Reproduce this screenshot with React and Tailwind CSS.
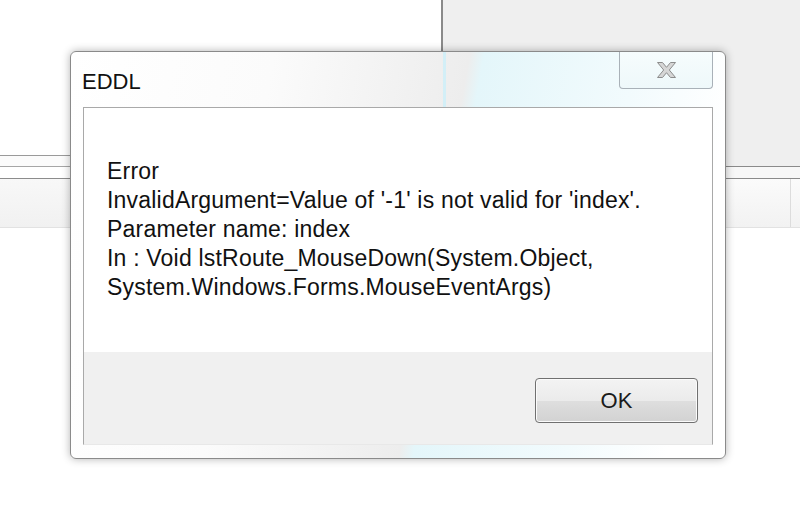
import React from 'react';

const CloseGlyph = () => (
  <svg width="19" height="16" viewBox="0 0 19 16">
    <path
      d="M0.5 0.5 H5.5 L9.5 5.3 L13.5 0.5 H18.5 L12.3 8 L18.5 15.5 H13.5 L9.5 10.7 L5.5 15.5 H0.5 L6.7 8 Z"
      fill="#d6d6d6"
      stroke="#8c8c8c"
      strokeWidth="1"
      strokeLinejoin="round"
    />
  </svg>
);

const App = () => {
  return (
    <div className="relative w-[800px] h-[528px] bg-white overflow-hidden font-['Liberation_Sans',Arial,sans-serif]">
      {/* Background windows */}
      <div className="flex h-[228px]">
        <div className="w-[441px] flex flex-col">
          <div className="h-[155px] bg-white" />
          <div className="h-px bg-[#9a9a9a]" />
          <div className="h-[10px] bg-[#fbfbfb]" />
          <div className="h-px bg-[#a6a6a6]" />
          <div className="h-[11px] bg-white" />
          <div className="h-px bg-[#8c8c8c]" />
          <div className="flex-1 bg-gradient-to-b from-[#f8f8f8] to-[#f1f1f1] border-b border-[#e2e2e2]" />
        </div>
        <div className="flex-1 flex flex-col">
          <div className="h-[166px] bg-[#efefef] border-l-2 border-[#8a8a8a]" />
          <div className="h-px bg-[#8a8a8a]" />
          <div className="h-[11px] bg-[#f7f7f7]" />
          <div className="h-px bg-[#8a8a8a]" />
          <div className="flex-1 flex bg-gradient-to-b from-[#fbfbfb] to-[#f2f2f2] border-b border-[#e2e2e2]">
            <div className="w-[349px]" />
            <div className="w-px bg-[#dcdcdc]" />
          </div>
        </div>
      </div>

      {/* Dialog */}
      <div className="absolute left-[70px] top-[51px] w-[656px] h-[408px] flex flex-col rounded-[6px] border border-[#8a8a8a] shadow-[0_0_9px_rgba(0,0,0,0.3)] bg-[linear-gradient(100deg,#ffffff_0%,#fbfbfb_28%,#ededed_55%,#e4f6fa_57%,#f2fbfd_78%,#ffffff_92%)]">
        <div className="relative h-[55px] pl-[11px] pt-[19px]">
          <span className="text-[22px] leading-none text-[#111]">EDDL</span>
          <div className="absolute left-[372px] top-0 w-[3px] h-[55px] bg-[#d3eff7]" />
          <div className="absolute top-0 right-[12px] w-[94px] h-[37px] flex items-center justify-center border-x border-b border-[#a9b1b8] rounded-b-[4px] bg-gradient-to-b from-[#f6fcfd] to-[#eef8fa]">
            <CloseGlyph />
          </div>
        </div>

        <div className="flex-1 mx-[12px] mb-[13px] flex flex-col border border-[#a9a9a9] border-b-[#e8e8e8] bg-white">
          <div className="flex-1 pl-[23px] pt-[49px] text-[23px] leading-[29px] tracking-[0.2px] text-[#111]">
            <div>Error</div>
            <div>InvalidArgument=Value of '-1' is not valid for 'index'.</div>
            <div>Parameter name: index</div>
            <div>In : Void lstRoute_MouseDown(System.Object,</div>
            <div>System.Windows.Forms.MouseEventArgs)</div>
          </div>
          <div className="h-[92px] bg-[#f0f0f0] flex justify-end items-start pt-[26px] pr-[14px]">
            <button className="w-[163px] h-[45px] rounded-[4px] border border-[#707070] shadow-[inset_0_0_0_1px_#fbfbfb] bg-[linear-gradient(to_bottom,#f3f3f3_0%,#ebebeb_50%,#dedede_52%,#d2d2d2_100%)] text-[22px] text-[#1a1a1a]">
              OK
            </button>
          </div>
        </div>
      </div>
    </div>
  );
};

export default App;
